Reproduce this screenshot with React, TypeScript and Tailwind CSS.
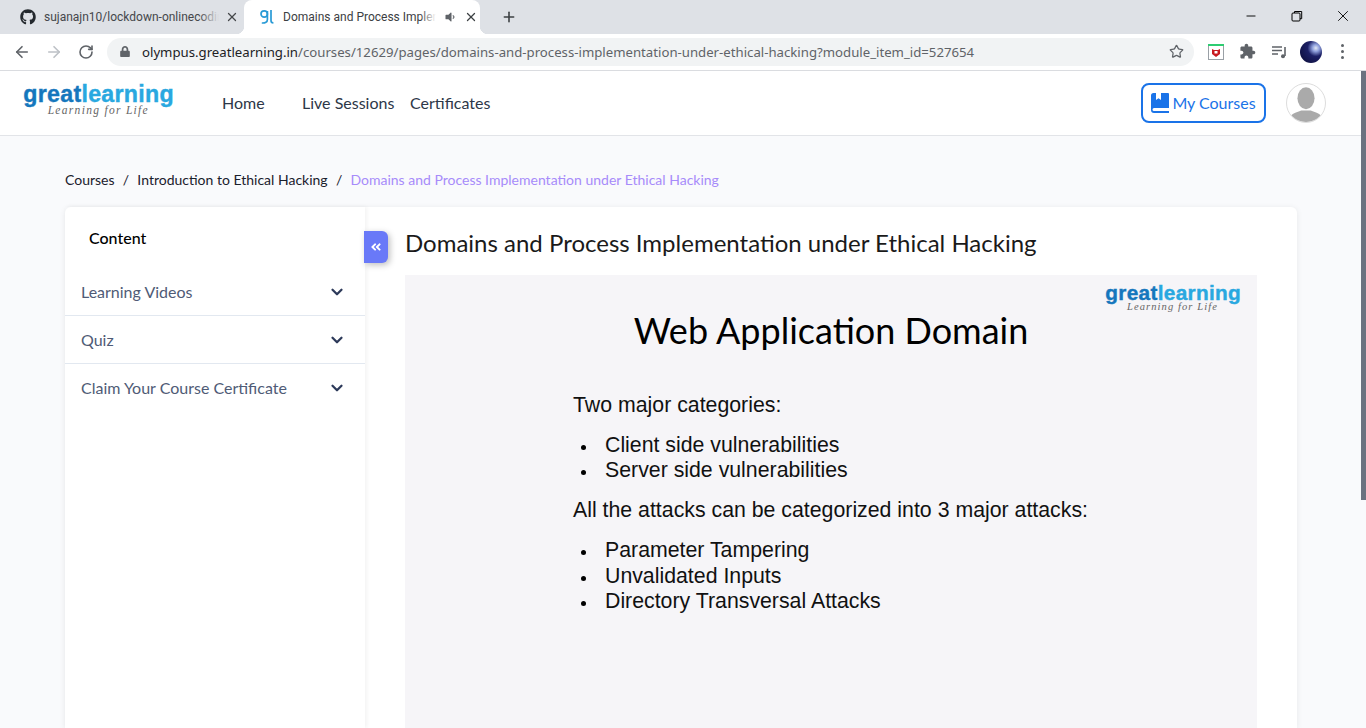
import { ArrowLeft, ArrowRight, ChevronDown, Minus, Plus, RotateCw, Star, X } from "lucide-react";
import { FaAngleDoubleLeft, FaGithub, FaLock, FaVolumeDown } from "react-icons/fa";

const chromeFont = "font-['Noto_Sans','Open_Sans',sans-serif]";

function Logo({ small }: { small?: boolean }) {
  return (
    <div className="flex flex-col items-end">
      <div
        className={`font-['Liberation_Sans',sans-serif] font-bold [-webkit-text-stroke:0.4px] ${
          small ? "text-[20.800px] leading-[19px] tracking-[0.3px]" : "text-[23.200px] leading-[21px] tracking-[0.3px]"
        }`}
      >
        <span className="text-[#1577bd]">great</span>
        <span className="text-[#29a8e0]">learning</span>
      </div>
      <div
        className={`font-['Liberation_Serif',serif] italic leading-none text-[#666] ${
          small ? "mr-[23px] text-[10.500px] tracking-[1.100px]" : "mr-[25px] text-[11.500px] tracking-[1.300px]"
        }`}
      >
        Learning for Life
      </div>
    </div>
  );
}

function TabStrip() {
  return (
    <div className={`flex h-[34px] items-end bg-[#dee1e6] ${chromeFont}`}>
      <div className="flex h-[34px] w-[244px] shrink-0 items-center pl-5 pr-[5px]">
        <FaGithub className="h-4 w-4 shrink-0 text-[#24292e]" />
        <div className="relative ml-2 w-[175px] shrink-0 overflow-hidden whitespace-nowrap font-['Roboto',sans-serif] text-xs text-[#45474b]">
          sujanajn10/lockdown-onlinecodin
          <div className="absolute inset-y-0 right-0 w-5 bg-gradient-to-r from-transparent to-[#dee1e6]" />
        </div>
        <X className="ml-[6px] h-[14px] w-[14px] shrink-0 text-[#45474b]" strokeWidth={2.2} />
      </div>
      <div className="relative flex h-[34px] w-[236px] shrink-0 items-center rounded-t-lg bg-white pl-4 pr-[2px] before:absolute before:-left-2 before:bottom-0 before:h-2 before:w-2 before:bg-[radial-gradient(circle_at_0_0,transparent_8px,white_8.500px)] after:absolute after:-right-2 after:bottom-0 after:h-2 after:w-2 after:bg-[radial-gradient(circle_at_100%_0,transparent_8px,white_8.500px)]">
        <svg viewBox="0 0 14 16" className="h-4 w-[14px] shrink-0" fill="none" stroke="#2a9bd6" strokeWidth="1.7">
          <circle cx="4.2" cy="5" r="3.2" />
          <path d="M7.4 2v8.5c0 2.6-2 3.7-5.600 3.500" />
          <path d="M11 1v10.500c0 1.700.8 2.400 2.400 2.400" />
        </svg>
        <div className="relative ml-[9px] w-[153px] shrink-0 overflow-hidden whitespace-nowrap font-['Roboto',sans-serif] text-xs text-[#3c4043]">
          Domains and Process Implen
          <div className="absolute inset-y-0 right-0 w-4 bg-gradient-to-r from-transparent to-white" />
        </div>
        <FaVolumeDown className="ml-[8px] h-3 w-3 shrink-0 text-[#5f6368]" />
        <X className="ml-[8px] h-[14px] w-[14px] shrink-0 text-[#3c4043]" strokeWidth={2.2} />
      </div>
      <div className="flex h-[34px] w-[58px] shrink-0 items-center justify-center">
        <Plus className="h-[16px] w-[16px] text-[#3c4043]" strokeWidth={2.400} />
      </div>
      <div className="ml-auto flex h-[34px] items-center pb-[3px] text-black">
        <div className="flex w-[46px] justify-center">
          <Minus className="h-[14px] w-[14px]" strokeWidth={1.600} />
        </div>
        <div className="flex w-[46px] justify-center">
          <svg viewBox="0 0 12 12" className="h-3 w-3" fill="none" stroke="currentColor">
            <rect x="1" y="3" width="8" height="8" rx="1" />
            <path d="M3.500 3V1.500h7.200v7.200H9" />
          </svg>
        </div>
        <div className="flex w-[46px] justify-center">
          <X className="h-[18px] w-[18px]" strokeWidth={1.200} />
        </div>
      </div>
    </div>
  );
}

function Toolbar() {
  return (
    <div className={`flex h-[37px] items-center border-b border-[#dadce0] bg-white pb-px ${chromeFont}`}>
      <div className="flex w-[107px] shrink-0 items-center pl-[13px]">
        <ArrowLeft className="h-[18px] w-[18px] text-[#5f6368]" strokeWidth={2.200} />
        <ArrowRight className="ml-[14px] h-[18px] w-[18px] text-[#bdc1c6]" strokeWidth={2.200} />
        <RotateCw className="ml-[15px] h-[16px] w-[16px] text-[#5f6368]" strokeWidth={2.400} />
      </div>
      <div className="flex h-[28px] w-[1087px] shrink-0 items-center rounded-full bg-[#f1f3f4] pl-[13px] pr-[10px]">
        <FaLock className="h-[11px] w-[10px] shrink-0 text-[#5f6368]" />
        <div className="ml-3 mt-[2px] whitespace-nowrap text-[13.200px] text-[#5f6368]">
          <span className="text-[#202124]">olympus.greatlearning.in</span>
          /courses/12629/pages/domains-and-process-implementation-under-ethical-hacking?module_item_id=527654
        </div>
        <Star className="ml-auto h-[15px] w-[15px] shrink-0 text-[#5f6368]" strokeWidth={2} />
      </div>
      <div className="flex flex-1 items-center pl-[14px]">
        <svg viewBox="0 0 16 16" className="h-4 w-4">
          <rect x="0.5" y="0.5" width="15" height="15" fill="#fff" stroke="#9aa0a6" />
          <rect width="16" height="2" fill="#2ecc71" />
          <path d="M4 5l2 1h4l2-1v5l-4 3-4-3z" fill="#c8191f" />
          <rect x="6.500" y="7" width="3" height="2.500" fill="#fff" />
        </svg>
        <svg viewBox="0 0 24 24" className="ml-[15px] h-[17px] w-[17px]" fill="#5f6368">
          <path d="M20.500 11H19V7c0-1.100-.9-2-2-2h-4V3.500C13 2.120 11.880 1 10.500 1S8 2.120 8 3.500V5H4c-1.100 0-1.990.9-1.990 2v3.800H3.500c1.490 0 2.700 1.210 2.700 2.700s-1.210 2.700-2.700 2.700H2V20c0 1.100.9 2 2 2h3.800v-1.500c0-1.490 1.210-2.700 2.700-2.700 1.490 0 2.700 1.210 2.700 2.700V22H17c1.100 0 2-.9 2-2v-4h1.500c1.380 0 2.500-1.120 2.500-2.500S21.880 11 20.500 11z" />
        </svg>
        <svg viewBox="0 0 16 16" className="ml-[15px] h-4 w-4" fill="none" stroke="#5f6368" strokeWidth="1.400">
          <path d="M1 3h10M1 6.500h10M1 10h6" />
          <path d="M14 3v9" strokeWidth="1.600" />
          <circle cx="12" cy="12.300" r="2" fill="#5f6368" stroke="none" />
        </svg>
        <div className="ml-[13px] h-[22px] w-[22px] rounded-full bg-[radial-gradient(circle_at_72%_32%,#e4e9f5_0%,#8fa0dc_16%,#1c2066_38%,#0a0b33_100%)]" />
        <div className="ml-[19px] flex flex-col gap-[3px]">
          <span className="h-[3px] w-[3px] rounded-full bg-[#5f6368]" />
          <span className="h-[3px] w-[3px] rounded-full bg-[#5f6368]" />
          <span className="h-[3px] w-[3px] rounded-full bg-[#5f6368]" />
        </div>
      </div>
    </div>
  );
}

function NavBar() {
  return (
    <header className="flex h-[65px] shrink-0 items-center border-b border-[#e2e4e8] bg-white pl-6 pr-10">
      <div className="mb-[5px] w-[150px]">
        <Logo />
      </div>
      <nav className="ml-12 flex text-base text-[#2d3748]">
        <a className="w-[80px]">Home</a>
        <a className="w-[108px]">Live Sessions</a>
        <a>Certificates</a>
      </nav>
      <button className="ml-auto flex h-[40px] w-[125px] items-center justify-center gap-[3px] rounded-lg border-2 border-[#1a73e8] text-base text-[#1a73e8]">
        <svg viewBox="0 0 18 20" className="h-5 w-[18px]" fill="#1a73e8">
          <path d="M2.500 0H5v7l2.500-1.800L10 7V0h7a1 1 0 0 1 1 1v14H3a1.500 1.500 0 0 0 0 3h15v2H3a3 3 0 0 1-3-3V2.500A2.500 2.500 0 0 1 2.500 0z" />
        </svg>
        My Courses
      </button>
      <div className="ml-5 h-10 w-10 overflow-hidden rounded-full border border-[#ddd] bg-white">
        <svg viewBox="0 0 40 40" className="h-full w-full" fill="#aaaaaa">
          <ellipse cx="20" cy="15" rx="9" ry="11.500" />
          <path d="M2 40c0-9 8-10 13-12h10c5 2 13 3 13 12z" />
        </svg>
      </div>
    </header>
  );
}

const sideItems = ["Learning Videos", "Quiz", "Claim Your Course Certificate"];

function Sidebar() {
  return (
    <aside className="relative w-[300px] shrink-0 shadow-[2px_0_4px_rgba(0,0,0,0.05)]">
      <div className="pl-6 pt-[21px] text-base font-medium leading-5 text-black">Content</div>
      <div className="mt-[20px]">
        {sideItems.map((item, i) => (
          <div
            key={item}
            className={`flex h-12 items-center justify-between pl-4 pr-[19px] text-base text-[#4f5b76] ${
              i < sideItems.length - 1 ? "border-b border-[#e2e8f0]" : ""
            }`}
          >
            {item}
            <ChevronDown className="h-[18px] w-[18px] text-[#2d3a5a]" strokeWidth={3} />
          </div>
        ))}
      </div>
      <button className="absolute -right-[23px] top-6 flex h-8 w-6 items-center justify-center rounded-r-md bg-[#6979f8] text-white shadow-[2px_2px_6px_rgba(0,0,0,0.25)]">
        <FaAngleDoubleLeft className="h-3 w-3" />
      </button>
    </aside>
  );
}

function SlideBullet({ text }: { text: string }) {
  return (
    <li className="flex items-center">
      <span className="ml-[8px] mr-[19px] mt-[4px] h-[5px] w-[5px] shrink-0 rounded-full bg-black" />
      {text}
    </li>
  );
}

function Slide() {
  return (
    <div className="relative flex-1 bg-[#f6f5f8] font-['Liberation_Sans',sans-serif] text-[21.300px] leading-[25.500px] text-[#111]">
      <div className="absolute right-4 top-[8px]">
        <Logo small />
      </div>
      <h2 className="pt-[31px] text-center font-['Lato',sans-serif] text-[36px] leading-[48px] text-black">
        Web Application Domain
      </h2>
      <div className="pl-[168px] pt-[39px]">
        <p>Two major categories:</p>
        <ul className="mt-[14px]">
          <SlideBullet text="Client side vulnerabilities" />
          <SlideBullet text="Server side vulnerabilities" />
        </ul>
        <p className="mt-[14px]">All the attacks can be categorized into 3 major attacks:</p>
        <ul className="mt-[15px]">
          <SlideBullet text="Parameter Tampering" />
          <SlideBullet text="Unvalidated Inputs" />
          <SlideBullet text="Directory Transversal Attacks" />
        </ul>
      </div>
    </div>
  );
}

export default function App() {
  return (
    <div className="flex h-[728px] flex-col overflow-hidden bg-white font-['Lato',sans-serif]">
      <TabStrip />
      <Toolbar />
      <div className="relative flex min-h-0 flex-1 flex-col bg-[#f9fafc]">
        <div className="absolute inset-y-0 right-0 w-[5px]">
          <div className="h-[429px] bg-[#6b7280]" />
        </div>
        <NavBar />
        <div className="flex min-h-0 flex-1 flex-col pl-[65px] pr-[69px]">
          <div className="flex h-[71px] shrink-0 items-center gap-[8.250px] pt-[17px] text-sm text-[#1a202c]">
            <span>Courses</span>
            <span>/</span>
            <span>Introduction to Ethical Hacking</span>
            <span>/</span>
            <span className="text-[#a78bfa]">Domains and Process Implementation under Ethical Hacking</span>
          </div>
          <div className="flex min-h-0 flex-1 rounded-t-md bg-white shadow-[0_1px_6px_rgba(0,0,0,0.08)]">
            <Sidebar />
            <main className="flex min-w-0 flex-1 flex-col px-10">
              <h1 className="pb-[15px] pt-[19px] text-2xl leading-[34px] text-[#1a1a1a]">
                Domains and Process Implementation under Ethical Hacking
              </h1>
              <Slide />
            </main>
          </div>
        </div>
      </div>
    </div>
  );
}
